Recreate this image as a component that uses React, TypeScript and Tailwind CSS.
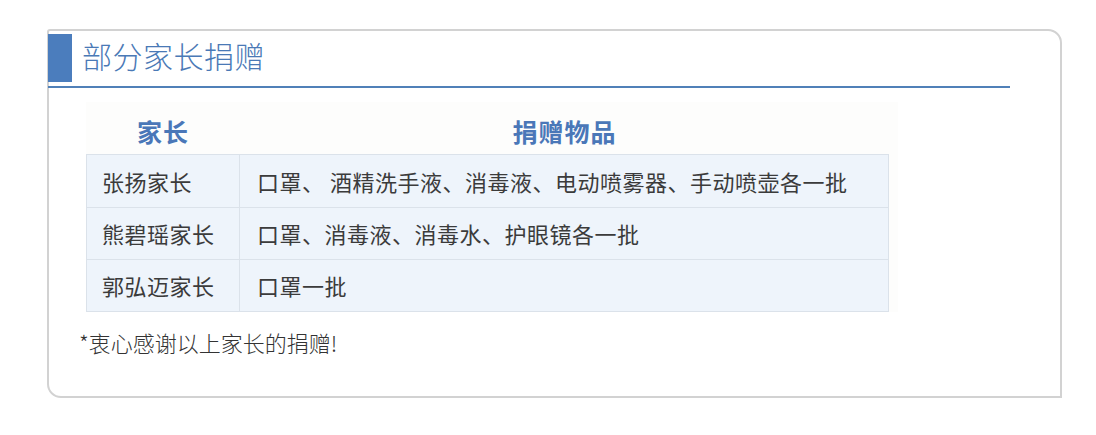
import * as React from "react";

const rows = [
  { name: "张扬家长", items: "口罩、 酒精洗手液、消毒液、电动喷雾器、手动喷壶各一批" },
  { name: "熊碧瑶家长", items: "口罩、消毒液、消毒水、护眼镜各一批" },
  { name: "郭弘迈家长", items: "口罩一批" },
];

export default function App() {
  return (
    <div
      className="min-h-screen bg-white pt-[29px] pl-[47px]"
      style={{ fontFamily: '"Noto Sans CJK SC", "Noto Sans", sans-serif' }}
    >
      <div className="w-[1015px] h-[369px] border-2 border-[#d2d2d2] rounded-tr-[14px] rounded-bl-[14px] rounded-tl-[3px]">
        {/* Title */}
        <div className="flex items-center mt-[3px] -ml-[1px]">
          <div className="w-[24px] h-[48px] bg-[#4b7dbd]" />
          <h2 className="ml-[10px] pb-[5px] text-[30px] leading-[43px] text-[#4a79b6] font-light tracking-[0.5px]">
            部分家长捐赠
          </h2>
        </div>
        <div className="mt-[4px] h-[2px] w-[962px] -ml-[1px] bg-[#5080b8]" />

        {/* Donation table */}
        <div className="ml-[37px] mt-[14px] w-[812px] bg-[#fdfdfc]">
          <div className="flex h-[52px] items-center pt-[8px] text-[25px] font-bold text-[#4a77b8] tracking-[1px]">
            <div className="w-[154px] text-center">家长</div>
            <div className="w-[649px] text-center">捐赠物品</div>
          </div>
          <div className="w-[803px] border border-[#dbe2ea] bg-[#eef4fb]">
            {rows.map((r, i) => (
              <div
                key={r.name}
                className={`flex h-[52px] items-center text-[22px] tracking-[0.5px] text-[#3b3b3b] ${i > 0 ? "border-t border-[#dbe2ea]" : ""}`}
              >
                <div className="w-[153px] h-full flex items-center pl-[15px] border-r border-[#dbe2ea]">{r.name}</div>
                <div className="flex-1 pl-[17px]">{r.items}</div>
              </div>
            ))}
          </div>
        </div>

        <p className="ml-[30px] mt-[17px] text-[22px] leading-[26px] text-[#333] font-light">
          *衷心感谢以上家长的捐赠!
        </p>
      </div>
    </div>
  );
}
